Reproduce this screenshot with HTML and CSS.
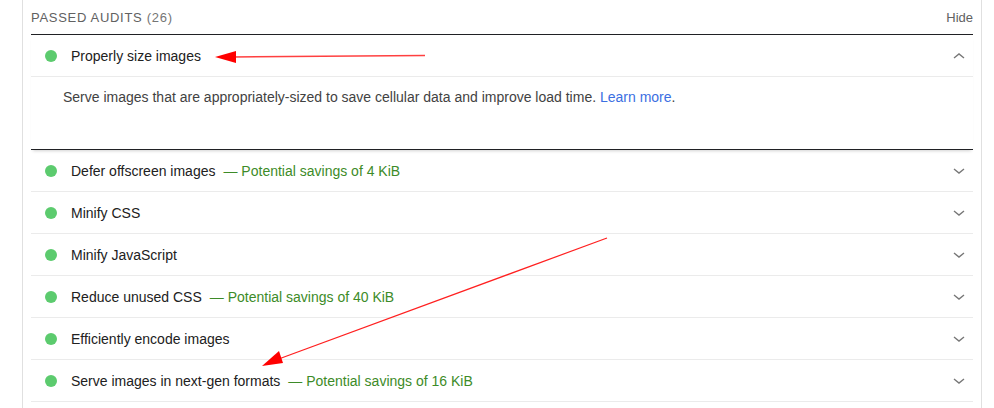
FILE: index.html
```html
<!DOCTYPE html>
<html>
<head>
<meta charset="utf-8">
<link rel="stylesheet" href="styles.css">
</head>
<body>
<div class="panel">
  <div class="group-header">
    <span class="group-title">Passed audits <span class="count">(26)</span></span>
    <span class="hide">Hide</span>
  </div>
  <div class="audit open">
    <div class="row">
      <span class="dot"></span>
      <span class="title">Properly size images</span>
      <svg class="chev" width="12" height="8" viewBox="0 0 12 8"><polyline points="1,6 6,2 11,6" fill="none" stroke="#777" stroke-width="1.4"/></svg>
    </div>
    <div class="desc">Serve images that are appropriately-sized to save cellular data and improve load time. <a class="link">Learn more</a>.</div>
  </div>
  <div class="audit">
    <div class="row"><span class="dot"></span><span class="title">Defer offscreen images</span><span class="savings">— Potential savings of 4 KiB</span>
      <svg class="chev" width="12" height="8" viewBox="0 0 12 8"><polyline points="1,2 6,6 11,2" fill="none" stroke="#777" stroke-width="1.4"/></svg></div>
  </div>
  <div class="audit">
    <div class="row"><span class="dot"></span><span class="title">Minify CSS</span>
      <svg class="chev" width="12" height="8" viewBox="0 0 12 8"><polyline points="1,2 6,6 11,2" fill="none" stroke="#777" stroke-width="1.4"/></svg></div>
  </div>
  <div class="audit">
    <div class="row"><span class="dot"></span><span class="title">Minify JavaScript</span>
      <svg class="chev" width="12" height="8" viewBox="0 0 12 8"><polyline points="1,2 6,6 11,2" fill="none" stroke="#777" stroke-width="1.4"/></svg></div>
  </div>
  <div class="audit">
    <div class="row"><span class="dot"></span><span class="title">Reduce unused CSS</span><span class="savings">— Potential savings of 40 KiB</span>
      <svg class="chev" width="12" height="8" viewBox="0 0 12 8"><polyline points="1,2 6,6 11,2" fill="none" stroke="#777" stroke-width="1.4"/></svg></div>
  </div>
  <div class="audit">
    <div class="row"><span class="dot"></span><span class="title">Efficiently encode images</span>
      <svg class="chev" width="12" height="8" viewBox="0 0 12 8"><polyline points="1,2 6,6 11,2" fill="none" stroke="#777" stroke-width="1.4"/></svg></div>
  </div>
  <div class="audit">
    <div class="row"><span class="dot"></span><span class="title">Serve images in next-gen formats</span><span class="savings">— Potential savings of 16 KiB</span>
      <svg class="chev" width="12" height="8" viewBox="0 0 12 8"><polyline points="1,2 6,6 11,2" fill="none" stroke="#777" stroke-width="1.4"/></svg></div>
  </div>
</div>
<svg class="arrows" width="994" height="408" viewBox="0 0 994 408">
  <line x1="425" y1="55.5" x2="232" y2="57" stroke="#ff4040" stroke-width="1.5"/>
  <polygon points="215,57 236,51 236,63" fill="#f00"/>
  <line x1="607" y1="238" x2="276" y2="360" stroke="#ff2020" stroke-width="1.2"/>
  <polygon points="262,366 279,351 283,363" fill="#f00"/>
</svg>
</body>
</html>
```

FILE: styles.css
```css
html, body {
  margin: 0;
  padding: 0;
  background: #fff;
}
body {
  font-family: "Liberation Sans", Arial, sans-serif;
  font-size: 14px;
  color: #212121;
  position: relative;
  width: 994px;
  height: 408px;
  overflow: hidden;
}
.panel {
  margin-left: 22px;
  width: 942px;
  padding: 0 8px;
  border-left: 1px solid #e0e0e0;
  border-right: 1px solid #e0e0e0;
  min-height: 408px;
}
.group-header {
  height: 34px;
  display: flex;
  justify-content: space-between;
  align-items: center;
  border-bottom: 1px solid #202124;
}
.group-title {
  text-transform: uppercase;
  font-size: 13px;
  letter-spacing: 0.7px;
  color: #616161;
}
.count { color: #757575; }
.hide {
  font-size: 13px;
  color: #616161;
}
.audit {
  border-bottom: 1px solid #ebebeb;
}
.row {
  height: 41px;
  display: flex;
  align-items: center;
  padding-left: 14px;
}
.dot {
  width: 12px;
  height: 12px;
  border-radius: 50%;
  background: #5ccb6e;
  margin-right: 14px;
  flex: none;
}
.title { color: #212121; }
.savings {
  color: #3d8b28;
  margin-left: 8px;
}
.chev {
  margin-left: auto;
  margin-right: 8px;
}
.audit.open {
  border-bottom: 1px solid #202124;
  box-shadow: 0 3px 3px -2px rgba(0,0,0,0.18);
  position: relative;
}
.audit.open .row {
  border-bottom: 1px solid #ebebeb;
}
.desc {
  height: 62px;
  padding: 10px 0 0 32px;
  line-height: 20px;
  color: #424242;
}
.link { color: #3b6fe2; }
.arrows {
  position: absolute;
  left: 0;
  top: 0;
  pointer-events: none;
}
```
